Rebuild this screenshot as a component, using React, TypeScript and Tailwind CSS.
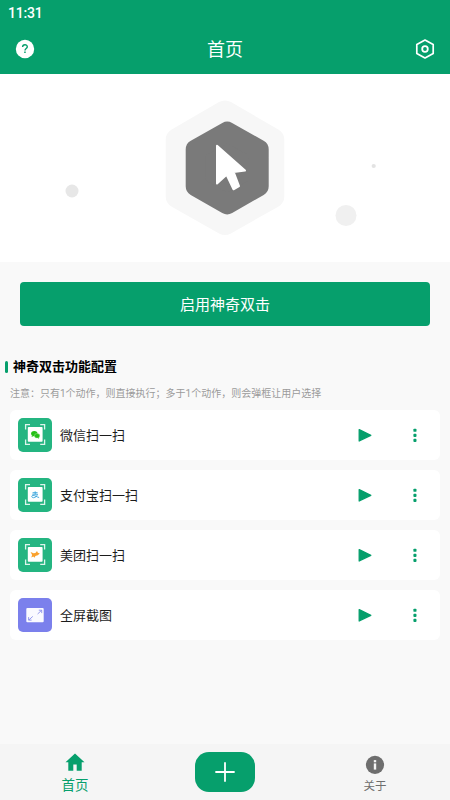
import React from 'react';

function CornerFrame() {
  return (
    <path
      d="M7.6 11.5V6.7H12 M22.2 6.7h4.4V11.5 M26.6 21.5v4.8h-4.4 M12 26.3H7.6V21.5"
      fill="none"
      stroke="#fff"
      strokeOpacity=".85"
      strokeWidth="1.3"
    />
  );
}

function WechatScan() {
  return (
    <svg className="size-[34px] shrink-0" viewBox="0 0 34 34">
      <rect width="34" height="34" rx="5" fill="#24b581" />
      <CornerFrame />
      <rect x="9.8" y="9" width="14.8" height="14.8" rx=".8" fill="#fdfffd" />
      <ellipse cx="16.3" cy="15.6" rx="3.2" ry="2.7" fill="#25c016" />
      <path d="M14 17.4l-.4 1.6 2-1z" fill="#25c016" />
      <ellipse cx="19.1" cy="17.8" rx="2.7" ry="2.3" fill="#25c016" stroke="#b5ecae" strokeWidth=".4" />
      <path d="M19.5 19.8l1.6 1-.2-1.4z" fill="#25c016" />
    </svg>
  );
}

function AlipayScan() {
  return (
    <svg className="size-[34px] shrink-0" viewBox="0 0 34 34">
      <rect width="34" height="34" rx="5" fill="#24b581" />
      <CornerFrame />
      <rect x="9.8" y="9" width="14.8" height="14.8" rx=".8" fill="#fdfffd" />
      <path
        d="M14.6 14.7h5 M17.2 13.4v3 M14.3 16.2h5.2c-.6 2-2.2 3.5-4 3.5-2.2 0-2.3-2.2-.4-2.3 2 0 3.8 1.7 6 2.1"
        fill="none"
        stroke="#3ba5dc"
        strokeWidth=".95"
      />
    </svg>
  );
}

function MeituanScan() {
  return (
    <svg className="size-[34px] shrink-0" viewBox="0 0 34 34">
      <rect width="34" height="34" rx="5" fill="#24b581" />
      <CornerFrame />
      <rect x="9.8" y="9" width="14.8" height="14.8" rx=".8" fill="#fdfffd" />
      <path
        d="M12.6 13.9l2.9 1.3 1.9-.2 1.6-2 .9 1.8 1.9.8-2 1.6-2.4.7-.9 1.8-1.2-1.1-2 .8.8-2.5z"
        fill="#f9a12b"
      />
    </svg>
  );
}

function Screenshot() {
  return (
    <svg className="size-[34px] shrink-0" viewBox="0 0 34 34">
      <rect width="34" height="34" rx="5" fill="#7b80ec" />
      <rect x="8.3" y="10" width="17.4" height="14.2" rx="1" fill="#fafaff" />
      <path
        d="M19.6 16l4-3.7 M20.8 12.2h2.9v2.9 M14.8 18.4l-4 3.6 M10.6 19.1v3h3"
        fill="none"
        stroke="#858aeb"
        strokeWidth=".85"
      />
    </svg>
  );
}

function ActionRow({ icon, label }: { icon: React.ReactNode; label: string }) {
  return (
    <div className="flex h-[50px] items-center rounded-[6px] bg-white pl-2">
      {icon}
      <span className="ml-2 grow pt-[2px] text-[13px] leading-5 text-[#1c1c1c]">{label}</span>
      <svg className="mr-[40px] h-[14px] w-[14px]" viewBox="0 0 14 14">
        <path
          d="M1.2 1.6v11.4L12.8 7.3z"
          fill="#069f6c"
          stroke="#069f6c"
          strokeWidth="1.3"
          strokeLinejoin="round"
        />
      </svg>
      <svg className="mr-[22px] h-[14px] w-[6px]" viewBox="0 0 6 14" fill="#069f6c">
        <rect x="1.4" y=".7" width="3.1" height="3.1" rx=".9" />
        <rect x="1.4" y="5.8" width="3.1" height="3.1" rx=".9" />
        <rect x="1.4" y="10.8" width="3.1" height="3.1" rx=".9" />
      </svg>
    </div>
  );
}

export default function App() {
  return (
    <div className="flex h-[800px] w-[450px] flex-col overflow-hidden bg-[#f9f9f9] font-[Roboto,'Noto_Sans_CJK_SC',sans-serif]">
      <header className="h-[74px] shrink-0 bg-[#069f6c] text-white">
        <div className="h-6 pl-[8px] pt-[3px] text-[14px] font-medium leading-5 tracking-[-0.2px]">11:31</div>
        <div className="flex h-[50px] items-center justify-between px-[15px]">
          <svg className="size-5" viewBox="0 0 20 20">
            <circle cx="10" cy="10" r="9.2" fill="#fff" />
            <path
              d="M7.6 8C7.6 5 12.3 5 12.3 7.8c0 1.7-2.3 1.8-2.3 3.6"
              fill="none"
              stroke="#069f6c"
              strokeWidth="1.4"
            />
            <rect x="9.2" y="12.5" width="1.5" height="1.5" fill="#069f6c" />
          </svg>
          <h1 className="pt-[2px] text-[18px] leading-6">首页</h1>
          <svg className="size-5" viewBox="0 0 20 20" fill="none" stroke="#fff">
            <path d="M10 1.1l8.2 4.5v8.8L10 18.9l-8.2-4.5V5.6z" strokeWidth="1.7" strokeLinejoin="round" />
            <circle cx="10" cy="10" r="2.8" strokeWidth="1.8" />
          </svg>
        </div>
      </header>

      <svg className="block h-[188px] w-full shrink-0 bg-white" viewBox="0 74 450 188">
        <path
          d="M225 112.5l47.3 27.3v56.4L225 223l-47.3-26.8v-56.4z"
          fill="#f7f7f7"
          stroke="#f7f7f7"
          strokeWidth="24"
          strokeLinejoin="round"
        />
        <path
          d="M227.2 131.7l31.5 17.8v36.8l-31.5 18-31.5-18v-36.8z"
          fill="#7a7a7a"
          stroke="#7a7a7a"
          strokeWidth="20"
          strokeLinejoin="round"
        />
        <path
          d="M217 145.7l28 24.8-11.3 1.6 5.3 14.1-5.5 3.1-6.9-14.6-9.6 8.8z"
          fill="#fff"
          stroke="#fff"
          strokeWidth="2"
          strokeLinejoin="round"
        />
        <circle cx="72" cy="191" r="6.5" fill="#e7e7e7" />
        <circle cx="346" cy="215.5" r="10.5" fill="#f0f0f0" />
        <circle cx="373.7" cy="166" r="2.1" fill="#e3e3e3" />
      </svg>

      <main className="flex grow flex-col">
        <button className="mx-5 mt-[20px] h-[44px] shrink-0 rounded-[4px] bg-[#069f6c] pt-[2px] text-[15px] text-white">
          启用神奇双击
        </button>
        <div className="mt-[31px] flex h-5 items-center pl-[5px]">
          <span className="h-3 w-[3px] rounded-full bg-[#069f6c]" />
          <h2 className="ml-[5px] text-[13px] font-bold leading-5 text-black">神奇双击功能配置</h2>
        </div>
        <p className="mt-[9px] pl-[10px] text-[10px] leading-4 text-[#9b9b9b]">
          注意：只有1个动作，则直接执行；多于1个动作，则会弹框让用户选择
        </p>
        <div className="mx-[10px] mt-[8px] flex flex-col gap-[10px]">
          <ActionRow icon={<WechatScan />} label="微信扫一扫" />
          <ActionRow icon={<AlipayScan />} label="支付宝扫一扫" />
          <ActionRow icon={<MeituanScan />} label="美团扫一扫" />
          <ActionRow icon={<Screenshot />} label="全屏截图" />
        </div>
      </main>

      <nav className="grid h-[56px] shrink-0 grid-cols-3 bg-[#f5f5f5]">
        <div className="flex flex-col items-center pt-[9px] text-[#069f6c]">
          <svg className="h-[18px] w-5" viewBox="0 0 20 18">
            <path d="M10 .5L.5 9.2h2.8v8.6h5v-6.4h3.4v6.4h5V9.2h2.8z" fill="currentColor" />
          </svg>
          <span className="mt-[4px] text-[13.5px] leading-5">首页</span>
        </div>
        <div className="flex justify-center pt-[8px]">
          <div className="flex h-10 w-[60px] items-center justify-center rounded-[14px] bg-[#069f6c]">
            <svg className="size-5" viewBox="0 0 20 20">
              <path d="M10 1v18M1 10h18" stroke="#fff" strokeWidth="1.8" strokeLinecap="round" />
            </svg>
          </div>
        </div>
        <div className="flex flex-col items-center pt-[11px] text-[#6e6e6e]">
          <svg className="h-5 w-5" viewBox="0 0 20 20">
            <circle cx="10" cy="9.9" r="9.1" fill="currentColor" />
            <rect x="8.8" y="5.1" width="2.4" height="2.2" fill="#f5f5f5" />
            <rect x="8.8" y="8.4" width="2.4" height="6.2" fill="#f5f5f5" />
          </svg>
          <span className="mt-[3px] text-[11.5px] leading-4">关于</span>
        </div>
      </nav>
    </div>
  );
}
